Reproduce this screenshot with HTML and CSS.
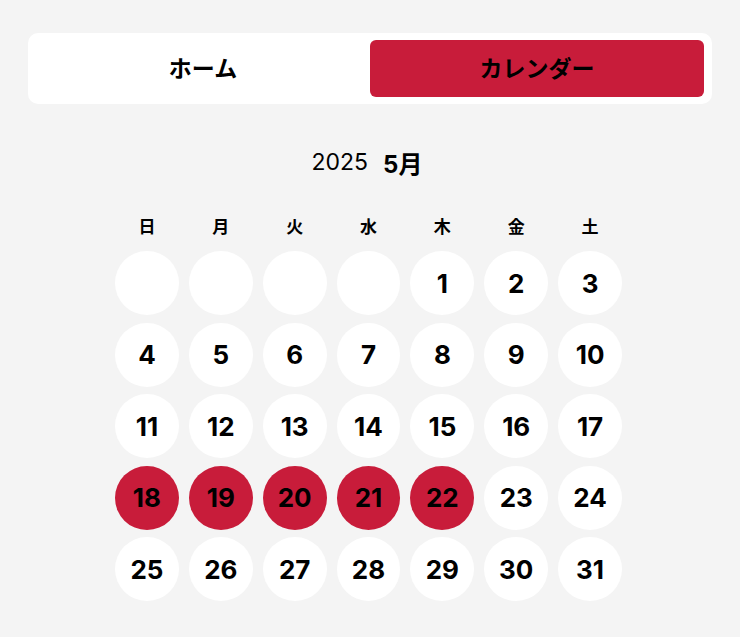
FILE: index.html
```html
<!DOCTYPE html>
<html lang="ja">
<head>
<meta charset="utf-8">
<title>カレンダー</title>
<link rel="stylesheet" href="styles.css">
</head>
<body>
<div class="page">
  <nav class="tabs">
    <div class="tab">ホーム</div>
    <div class="tab active">カレンダー</div>
  </nav>
  <div class="month-title"><span class="year">2025</span><span class="month">5月</span></div>
  <div class="weekdays">
    <span>日</span><span>月</span><span>火</span><span>水</span><span>木</span><span>金</span><span>土</span>
  </div>
  <div class="grid">
    <div class="day"></div><div class="day"></div><div class="day"></div><div class="day"></div>
    <div class="day">1</div><div class="day">2</div><div class="day">3</div>
    <div class="day">4</div><div class="day">5</div><div class="day">6</div><div class="day">7</div>
    <div class="day">8</div><div class="day">9</div><div class="day">10</div>
    <div class="day">11</div><div class="day">12</div><div class="day">13</div><div class="day">14</div>
    <div class="day">15</div><div class="day">16</div><div class="day">17</div>
    <div class="day sel">18</div><div class="day sel">19</div><div class="day sel">20</div><div class="day sel">21</div>
    <div class="day sel">22</div><div class="day">23</div><div class="day">24</div>
    <div class="day">25</div><div class="day">26</div><div class="day">27</div><div class="day">28</div>
    <div class="day">29</div><div class="day">30</div><div class="day">31</div>
  </div>
</div>
</body>
</html>
```
FILE: styles.css
```css
html, body {
  margin: 0;
  padding: 0;
  background: #f4f4f4;
}
body {
  font-family: Inter, "Noto Sans CJK JP", sans-serif;
  color: #000;
}
.page {
  padding: 33px 28px 0 28px;
}
.tabs {
  display: flex;
  background: #fff;
  border-radius: 10px;
  padding: 7px 8px;
  height: 57px;
}
.tab {
  flex: 1;
  display: flex;
  align-items: center;
  justify-content: center;
  padding-bottom: 3px;
  font-family: "Noto Sans CJK JP", sans-serif;
  font-weight: 700;
  font-size: 23px;
  border-radius: 6px;
}
.tab.active {
  background: #c81c3a;
}
.month-title {
  margin-top: 43px;
  height: 30px;
  display: flex;
  justify-content: center;
  align-items: center;
  gap: 15px;
  padding-right: 6px;
}
.year {
  font-size: 23px;
  font-weight: 400;
}
.month {
  font-family: Inter, "Noto Sans CJK JP", sans-serif;
  font-size: 24px;
  font-weight: 700;
}
.weekdays,
.grid {
  width: 507px;
  margin-left: 87px;
  display: grid;
  grid-template-columns: repeat(7, 1fr);
  column-gap: 10px;
}
.weekdays {
  margin-top: 36px;
  height: 20px;
  justify-items: center;
  align-items: center;
  font-family: "Noto Sans CJK JP", sans-serif;
  font-size: 17px;
  font-weight: 700;
}
.grid {
  margin-top: 18px;
  grid-auto-rows: 64px;
  row-gap: 7.5px;
}
.day {
  border-radius: 50%;
  background: #fff;
  display: flex;
  align-items: center;
  justify-content: center;
  font-size: 26px;
  font-weight: 700;
}
.day.sel {
  background: #c81c3a;
}
```
